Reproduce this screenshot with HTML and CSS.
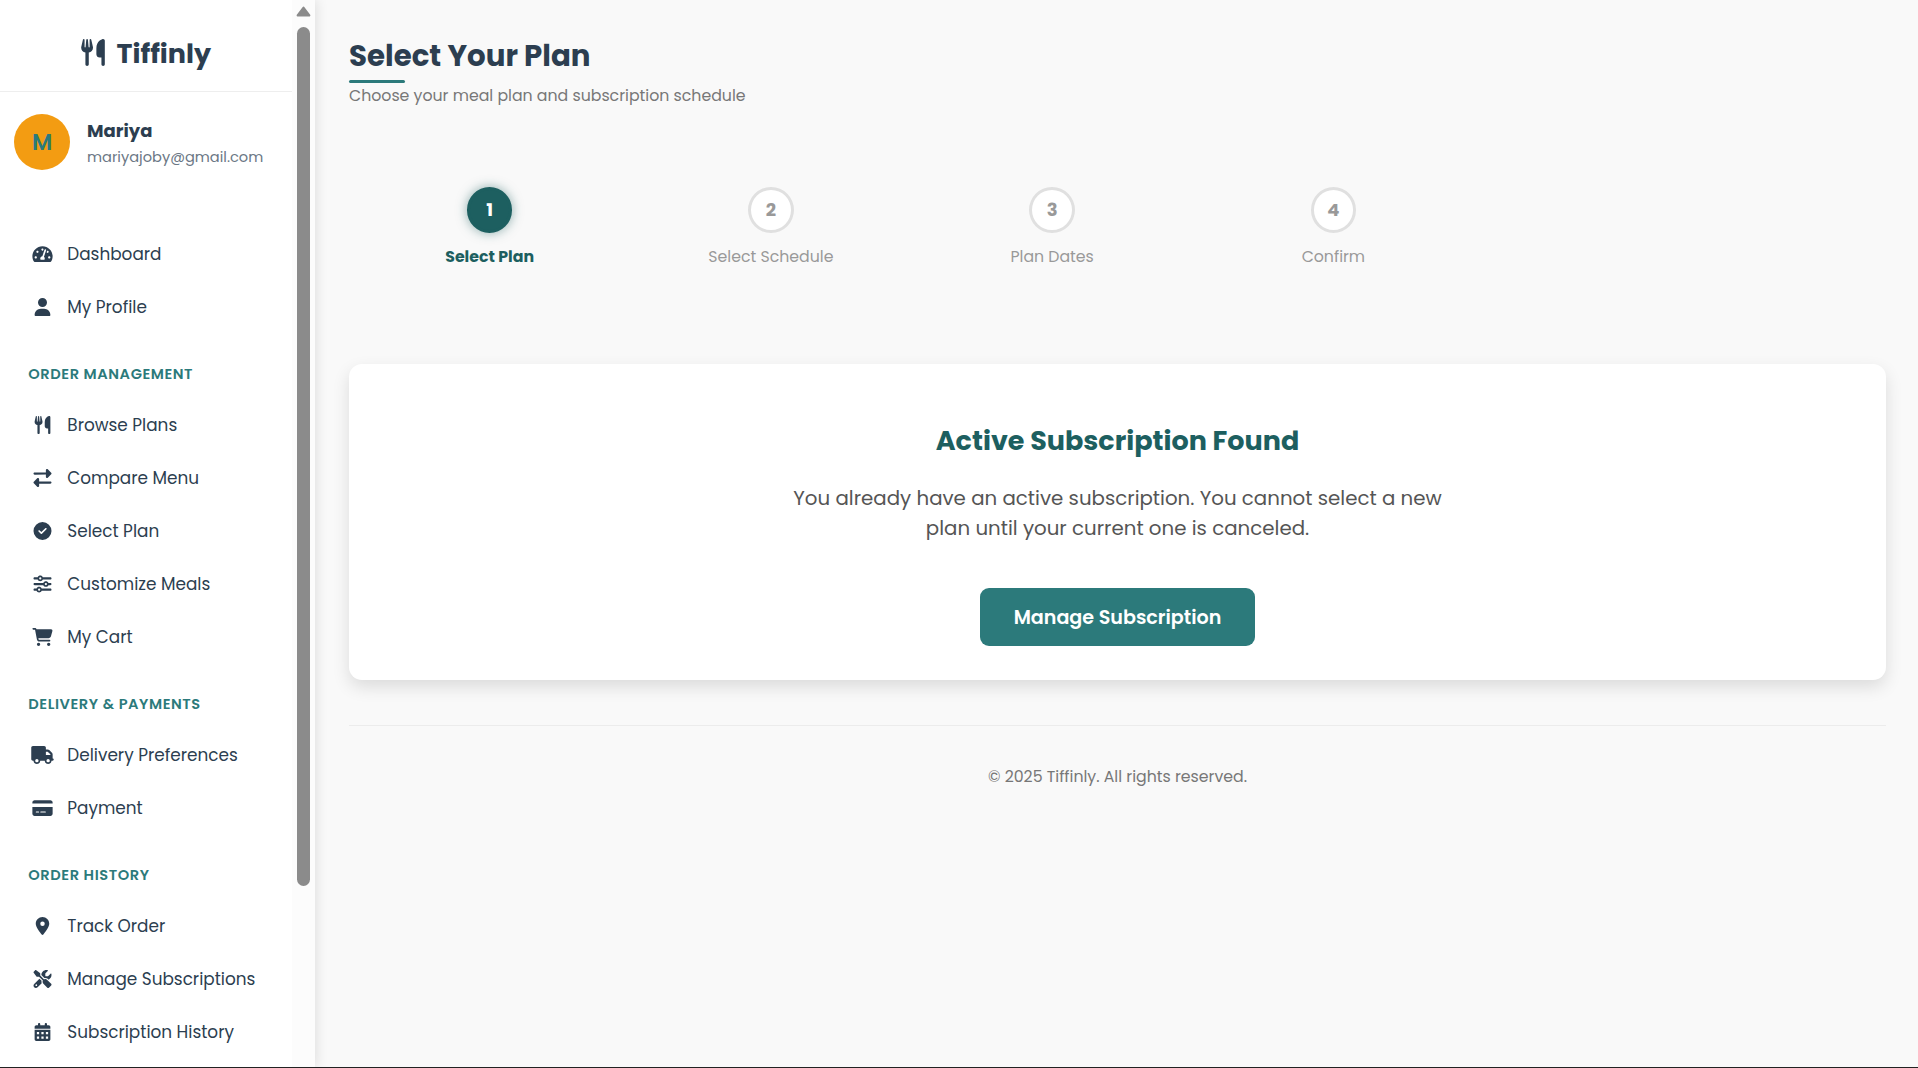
FILE: index.html
```html
<!DOCTYPE html>
<html lang="en">
<head>
<meta charset="utf-8">
<title>Tiffinly - Select Your Plan</title>
<link rel="stylesheet" href="styles.css">
</head>
<body>
<div class="app">
  <aside class="sidebar">
    <div class="sidebar-content">
      <div class="brand">
        <svg class="brand-icon" viewBox="0 0 448 512"><use href="#utensils"/></svg>
        <span class="brand-name">Tiffinly</span>
      </div>
      <div class="user">
        <div class="avatar">M</div>
        <div class="user-text">
          <div class="user-name">Mariya</div>
          <div class="user-email">mariyajoby@gmail.com</div>
        </div>
      </div>
      <nav class="menu">
        <a class="item"><svg class="icon" viewBox="0 0 576 512"><path d="M288 32C128.94 32 0 160.94 0 320c0 52.8 14.25 102.26 39.06 144.8 5.61 9.62 16.3 15.2 27.44 15.2h443c11.14 0 21.83-5.58 27.44-15.2C561.75 422.26 576 372.8 576 320c0-159.06-128.94-288-288-288zm0 64c14.71 0 26.58 10.13 30.32 23.65-1.11 2.26-2.64 4.23-3.45 6.67l-9.22 27.67c-5.13 3.49-10.97 6.01-17.64 6.01-17.67 0-32-14.33-32-32S270.33 96 288 96zM96 384c-17.67 0-32-14.33-32-32s14.33-32 32-32 32 14.33 32 32-14.33 32-32 32zm48-160c-17.67 0-32-14.33-32-32s14.33-32 32-32 32 14.33 32 32-14.33 32-32 32zm246.77-72.41l-61.33 184C343.13 347.33 352 364.54 352 384c0 11.72-3.38 22.55-8.88 32H232.88c-5.5-9.45-8.88-20.28-8.88-32 0-33.94 26.5-61.43 59.9-63.59l61.34-184.01c4.17-12.56 17.73-19.45 30.36-15.17 12.57 4.19 19.35 17.79 15.17 30.36zm14.66 57.2l15.52-46.55c3.47-1.29 7.13-2.23 11.05-2.23 17.67 0 32 14.33 32 32s-14.33 32-32 32c-11.38-.01-20.89-6.28-26.57-15.22zM480 384c-17.67 0-32-14.33-32-32s14.33-32 32-32 32 14.33 32 32-14.33 32-32 32z"/></svg>Dashboard</a>
        <a class="item"><svg class="icon" viewBox="0 0 448 512"><path d="M224 256A128 128 0 1 0 224 0a128 128 0 1 0 0 256zm-45.7 48C79.8 304 0 383.8 0 482.3C0 498.7 13.3 512 29.7 512H418.3c16.4 0 29.7-13.3 29.7-29.7C448 383.8 368.2 304 269.7 304H178.3z"/></svg>My Profile</a>
        <h3 class="section">ORDER MANAGEMENT</h3>
        <a class="item"><svg class="icon" viewBox="0 0 448 512"><path id="utensils" d="M416 0C400 0 288 32 288 176V288c0 35.3 28.7 64 64 64h32V480c0 17.7 14.3 32 32 32s32-14.3 32-32V352 240 32c0-17.7-14.3-32-32-32zM64 16C64 7.8 57.9 1 49.7 .1S34.2 4.6 32.4 12.5L2.1 148.8C.7 155.1 0 161.5 0 167.9c0 45.9 35.1 83.6 80 87.7V480c0 17.7 14.3 32 32 32s32-14.3 32-32V255.6c44.9-4.1 80-41.8 80-87.7c0-6.4-.7-12.8-2.1-19.1L191.6 12.5c-1.8-8-9.3-13.3-17.4-12.4S160 7.8 160 16V150.2c0 5.4-4.4 9.8-9.8 9.8c-5.1 0-9.3-3.9-9.8-9L127.9 14.6C127.2 6.3 120.3 0 112 0s-15.2 6.3-15.9 14.6L83.7 151c-.5 5.1-4.7 9-9.8 9c-5.4 0-9.8-4.4-9.8-9.8V16z"/></svg>Browse Plans</a>
        <a class="item"><svg class="icon" viewBox="0 0 512 512"><path d="M32 96l320 0 0-64c0-12.9 7.8-24.6 19.8-29.6s25.7-2.2 34.9 6.9l96 96c6 6 9.4 14.1 9.4 22.6s-3.4 16.6-9.4 22.6l-96 96c-9.2 9.2-22.9 11.9-34.9 6.9s-19.8-16.6-19.8-29.6l0-64L32 160c-17.7 0-32-14.3-32-32s14.3-32 32-32zM480 352c17.7 0 32 14.3 32 32s-14.3 32-32 32l-320 0 0 64c0 12.9-7.8 24.6-19.8 29.6s-25.7 2.2-34.9-6.9l-96-96c-6-6-9.4-14.1-9.4-22.6s3.4-16.6 9.4-22.6l96-96c9.2-9.2 22.9-11.9 34.9-6.9s19.8 16.6 19.8 29.6l0 64 320 0z"/></svg>Compare Menu</a>
        <a class="item"><svg class="icon" viewBox="0 0 512 512"><path d="M256 512A256 256 0 1 0 256 0a256 256 0 1 0 0 512zM369 209L241 337c-9.4 9.4-24.6 9.4-33.9 0l-64-64c-9.4-9.4-9.4-24.6 0-33.9s24.6-9.4 33.9 0l47 47L335 175c9.4-9.4 24.6-9.4 33.9 0s9.4 24.6 0 33.9z"/></svg>Select Plan</a>
        <a class="item"><svg class="icon" viewBox="0 0 512 512"><path d="M0 416c0 17.7 14.3 32 32 32l54.7 0c12.3 28.3 40.5 48 73.3 48s61-19.7 73.3-48L480 448c17.7 0 32-14.3 32-32s-14.3-32-32-32l-246.7 0c-12.3-28.3-40.5-48-73.3-48s-61 19.7-73.3 48L32 384c-17.7 0-32 14.3-32 32zm128 0a32 32 0 1 1 64 0 32 32 0 1 1 -64 0zM320 256a32 32 0 1 1 64 0 32 32 0 1 1 -64 0zm32-80c-32.8 0-61 19.7-73.3 48L32 224c-17.7 0-32 14.3-32 32s14.3 32 32 32l246.7 0c12.3 28.3 40.5 48 73.3 48s61-19.7 73.3-48l54.7 0c17.7 0 32-14.3 32-32s-14.3-32-32-32l-54.7 0c-12.3-28.3-40.5-48-73.3-48zM192 128a32 32 0 1 1 0-64 32 32 0 1 1 0 64zm73.3-64C253 35.7 224.8 16 192 16s-61 19.7-73.3 48L32 64C14.3 64 0 78.3 0 96s14.3 32 32 32l86.7 0c12.3 28.3 40.5 48 73.3 48s61-19.7 73.3-48L480 128c17.7 0 32-14.3 32-32s-14.3-32-32-32L265.3 64z"/></svg>Customize Meals</a>
        <a class="item"><svg class="icon" viewBox="0 0 576 512"><path d="M0 24C0 10.7 10.7 0 24 0H69.5c22 0 41.5 12.8 50.6 32h411c26.3 0 45.5 25 38.6 50.4l-41 152.3c-8.5 31.4-37 53.3-69.5 53.3H170.7l5.4 28.5c2.2 11.3 12.1 19.5 23.6 19.5H488c13.3 0 24 10.7 24 24s-10.7 24-24 24H199.7c-34.6 0-64.3-24.6-70.7-58.5L77.4 54.5c-.7-3.8-4-6.5-7.9-6.5H24C10.7 48 0 37.3 0 24zM128 464a48 48 0 1 1 96 0 48 48 0 1 1 -96 0zm336-48a48 48 0 1 1 0 96 48 48 0 1 1 0-96z"/></svg>My Cart</a>
        <h3 class="section">DELIVERY &amp; PAYMENTS</h3>
        <a class="item"><svg class="icon" viewBox="0 0 640 512"><path d="M48 0C21.5 0 0 21.5 0 48V368c0 26.5 21.5 48 48 48H64c0 53 43 96 96 96s96-43 96-96H384c0 53 43 96 96 96s96-43 96-96h32c17.7 0 32-14.3 32-32s-14.3-32-32-32V288 256 237.3c0-17-6.7-33.3-18.7-45.3L512 114.7c-12-12-28.3-18.7-45.3-18.7H416V48c0-26.5-21.5-48-48-48H48zM416 160h50.7L544 237.3V256H416V160zM112 416a48 48 0 1 1 96 0 48 48 0 1 1 -96 0zm368-48a48 48 0 1 1 0 96 48 48 0 1 1 0-96z"/></svg>Delivery Preferences</a>
        <a class="item"><svg class="icon" viewBox="0 0 576 512"><path d="M64 32C28.7 32 0 60.7 0 96v32H576V96c0-35.3-28.7-64-64-64H64zM576 224H0V416c0 35.3 28.7 64 64 64H512c35.3 0 64-28.7 64-64V224zM112 352h64c8.8 0 16 7.2 16 16s-7.2 16-16 16H112c-8.8 0-16-7.2-16-16s7.2-16 16-16zm112 16c0-8.8 7.2-16 16-16H368c8.8 0 16 7.2 16 16s-7.2 16-16 16H240c-8.8 0-16-7.2-16-16z"/></svg>Payment</a>
        <h3 class="section">ORDER HISTORY</h3>
        <a class="item"><svg class="icon" viewBox="0 0 384 512"><path d="M215.7 499.2C267 435 384 279.4 384 192C384 86 298 0 192 0S0 86 0 192c0 87.4 117 243 168.3 307.2c12.3 15.3 35.1 15.3 47.4 0zM192 128a64 64 0 1 1 0 128 64 64 0 1 1 0-128z"/></svg>Track Order</a>
        <a class="item"><svg class="icon" viewBox="0 0 512 512"><path d="M78.6 5C69.1-2.4 55.6-1.5 47 7L7 47c-8.5 8.5-9.4 22-2.1 31.6l80 104c4.5 5.9 11.6 9.4 19 9.4h54.1l109 109c-14.7 29-10 65.4 14.3 89.6l112 112c12.5 12.5 32.8 12.5 45.3 0l64-64c12.5-12.5 12.5-32.8 0-45.3l-112-112c-24.2-24.2-60.6-29-89.6-14.3l-109-109V104c0-7.5-3.5-14.5-9.4-19L78.6 5zM19.9 396.1C7.2 408.8 0 426.1 0 444.1C0 481.6 30.4 512 67.9 512c18 0 35.3-7.2 48-19.9L233.7 374.3c-7.8-20.9-9-43.6-3.6-65.1l-61.7-61.7L19.9 396.1zM512 144c0-10.5-1.1-20.7-3.2-30.5c-2.4-11.2-16.1-14.1-24.2-6l-63.9 63.9c-3 3-7.1 4.7-11.3 4.7H352c-8.8 0-16-7.2-16-16V102.6c0-4.2 1.7-8.3 4.7-11.3l63.9-63.9c8.1-8.1 5.2-21.8-6-24.2C388.7 1.1 378.5 0 368 0C288.5 0 224 64.5 224 144l0 .8 85.3 85.3c36-9.1 75.8 .5 104 28.7L429 274.5c49-23 83-72.8 83-130.5zM56 432a24 24 0 1 1 48 0 24 24 0 1 1 -48 0z"/></svg>Manage Subscriptions</a>
        <a class="item"><svg class="icon" viewBox="0 0 448 512"><path fill-rule="evenodd" d="M128 0c17.7 0 32 14.3 32 32V64H288V32c0-17.7 14.3-32 32-32s32 14.3 32 32V64h48c26.5 0 48 21.5 48 48v48H0V112C0 85.5 21.5 64 48 64H96V32c0-17.7 14.3-32 32-32zM0 192H448V464c0 26.5-21.5 48-48 48H48c-26.5 0-48-21.5-48-48V192zM64 256h64v64H64zM192 256h64v64h-64zM320 256h64v64h-64zM64 384h64v64H64zM192 384h64v64h-64zM320 384h64v64h-64z"/></svg>Subscription History</a>
      </nav>
    </div>
    <div class="scrollbar">
      <svg class="scroll-up" viewBox="0 0 15 11"><path d="M7.5 1.6 13.4 9.4H1.6Z"/></svg>
      <div class="scroll-thumb"></div>
    </div>
  </aside>
  <main class="main">
    <header class="page-header">
      <h1 class="title">Select Your Plan</h1>
      <div class="title-bar"></div>
      <p class="subtitle">Choose your meal plan and subscription schedule</p>
    </header>
    <ol class="steps">
      <li class="step active"><div class="circle">1</div><div class="step-label">Select Plan</div></li>
      <li class="step"><div class="circle">2</div><div class="step-label">Select Schedule</div></li>
      <li class="step"><div class="circle">3</div><div class="step-label">Plan Dates</div></li>
      <li class="step"><div class="circle">4</div><div class="step-label">Confirm</div></li>
    </ol>
    <section class="card">
      <h2 class="card-title">Active Subscription Found</h2>
      <p class="card-text">You already have an active subscription. You cannot select a new plan until your current one is canceled.</p>
      <a class="button">Manage Subscription</a>
    </section>
    <footer class="footer">© 2025 Tiffinly. All rights reserved.</footer>
  </main>
</div>
</body>
</html>
```
FILE: styles.css
```css
* { box-sizing: border-box; }

body {
  margin: 0;
  background: #f9f9f9;
  color: #2c3e50;
  font-family: Poppins, Inter, "Open Sans", sans-serif;
}

h1, h2, h3, p, ol { margin: 0; padding: 0; }

.app {
  display: flex;
  height: 1068px;
  overflow: hidden;
  border-bottom: 1px solid #222;
}

.sidebar {
  display: flex;
  flex: none;
  width: 315px;
  background: #fff;
  box-shadow: 2px 0 11px rgba(0, 0, 0, 0.1);
}

.sidebar-content { width: 292px; overflow: hidden; }

.scrollbar {
  display: flex;
  flex-direction: column;
  align-items: center;
  width: 23px;
  padding-top: 6px;
  background: #fcfcfc;
}
.scroll-up {
  width: 15px;
  height: 11px;
  fill: #8b8b8b;
  stroke: #8b8b8b;
  stroke-width: 2;
  stroke-linejoin: round;
}
.scroll-thumb {
  width: 13px;
  height: 859px;
  margin-top: 10px;
  border-radius: 7px;
  background: #8b8b8b;
}

.brand {
  display: flex;
  align-items: center;
  height: 92px;
  padding: 14px 0 0 81px;
  border-bottom: 1px solid #eee;
  gap: 11.5px;
}
.brand-icon { width: 24px; height: 27px; fill: #2c3e50; }
.brand-name { padding-top: 3px; font-size: 27px; font-weight: 700; line-height: 40px; }

.user { display: flex; gap: 17px; padding: 22px 14px 0; }
.avatar {
  width: 56px;
  height: 56px;
  border-radius: 50%;
  background: #f39c12;
  color: #2c7a7b;
  font-size: 22.5px;
  font-weight: 600;
  line-height: 57px;
  text-align: center;
}
.user-text { height: 56px; padding-top: 3px; }
.user-name { font-size: 18px; font-weight: 700; line-height: 27px; }
.user-email { padding-top: 1px; font-size: 14.625px; line-height: 25px; color: #6b7785; }

.menu { padding-top: 57.5px; }
.item {
  display: flex;
  align-items: center;
  height: 53px;
  padding-left: 30px;
  gap: 12.3px;
  font-size: 16.875px;
}
.icon { flex: none; width: 25px; height: 18px; fill: #2c3e50; }
.section {
  height: 65px;
  padding: 28px 0 0 28.3px;
  color: #2c7a7b;
  font-size: 14.625px;
  font-weight: 600;
  line-height: 25px;
  letter-spacing: 0.5625px;
}

.main { flex: 1; padding: 36px 32px 0 34px; }

.title { font-size: 29.25px; font-weight: 700; line-height: 40px; }
.title-bar {
  width: 56px;
  height: 3px;
  margin-top: 4px;
  border-radius: 2px;
  background: #2c7a7b;
}
.subtitle { color: #777; font-size: 15.75px; line-height: 25px; }

.steps { display: flex; margin-top: 79px; list-style: none; }
.step { width: 281.25px; text-align: center; }
.circle {
  width: 45.5px;
  height: 46px;
  margin: 0 auto;
  border: 3px solid #e0e0e0;
  border-radius: 50%;
  background: #fff;
  color: #999;
  font-size: 18px;
  font-weight: 700;
  line-height: 40px;
}
.step-label { margin-top: 11px; color: #999; font-size: 15.75px; line-height: 25px; }
.active .circle {
  border-color: #1d5f60;
  background: #1d5f60;
  color: #fff;
  box-shadow: 0 0 11px rgba(29, 95, 96, 0.5);
}
.active .step-label { color: #1d5f60; font-weight: 700; }

.card {
  height: 316px;
  margin-top: 95px;
  padding-top: 57px;
  border-radius: 13px;
  background: #fff;
  box-shadow: 0 7px 17px rgba(0, 0, 0, 0.12);
  text-align: center;
}
.card-title { color: #1d5f60; font-size: 27px; font-weight: 700; line-height: 40px; }
.card-text {
  width: 675px;
  margin: 22px auto 0;
  color: #555;
  font-size: 19.8px;
  line-height: 30px;
}
.button {
  display: block;
  width: 275px;
  height: 58px;
  margin: 45px auto 0;
  padding-top: 1px;
  border-radius: 9px;
  background: #2c7a7b;
  color: #fff;
  font-size: 19.125px;
  font-weight: 600;
  line-height: 58px;
}

.footer {
  margin-top: 45px;
  padding-top: 38px;
  border-top: 1px solid #ececec;
  color: #777;
  font-size: 15.75px;
  line-height: 25px;
  text-align: center;
}
```
